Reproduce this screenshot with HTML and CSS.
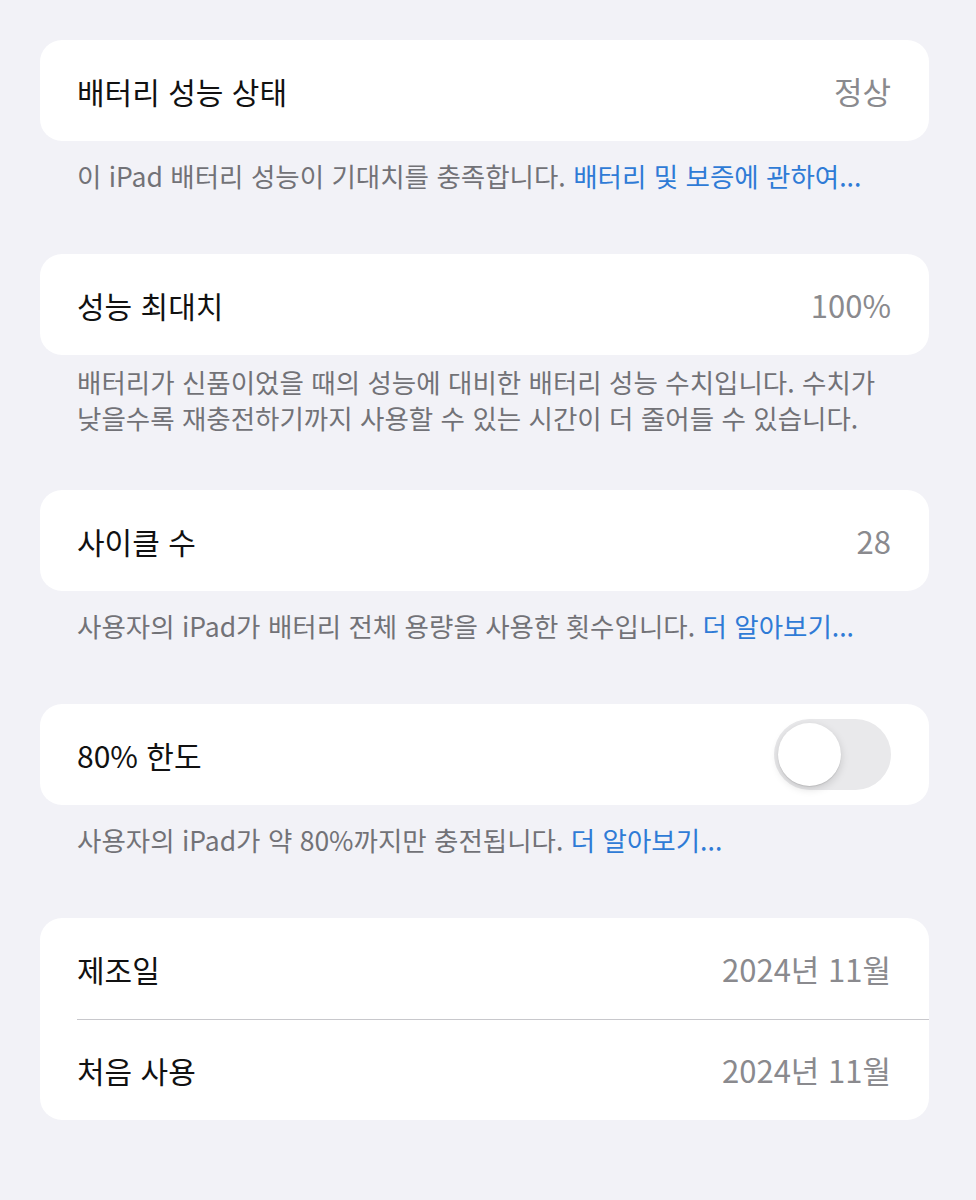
FILE: index.html
```html
<!DOCTYPE html>
<html lang="ko">
<head>
    <meta charset="UTF-8">
    <meta name="viewport" content="width=device-width, initial-scale=1.0">
    <title>배터리</title>
    <link rel="stylesheet" href="styles.css">
</head>
<body>
    <div class="page">
        <div class="card">
            <div class="row">
                <span class="label">배터리 성능 상태</span>
                <span class="value">정상</span>
            </div>
        </div>
        <p class="note">이 iPad 배터리 성능이 기대치를 충족합니다. <a href="#">배터리 및 보증에 관하여...</a></p>

        <div class="card">
            <div class="row">
                <span class="label">성능 최대치</span>
                <span class="value">100%</span>
            </div>
        </div>
        <p class="note multi">배터리가 신품이었을 때의 성능에 대비한 배터리 성능 수치입니다. 수치가<br>낮을수록 재충전하기까지 사용할 수 있는 시간이 더 줄어들 수 있습니다.</p>

        <div class="card">
            <div class="row">
                <span class="label">사이클 수</span>
                <span class="value">28</span>
            </div>
        </div>
        <p class="note">사용자의 iPad가 배터리 전체 용량을 사용한 횟수입니다. <a href="#">더 알아보기...</a></p>

        <div class="card">
            <div class="row">
                <span class="label">80% 한도</span>
                <span class="switch"><span class="knob"></span></span>
            </div>
        </div>
        <p class="note">사용자의 iPad가 약 80%까지만 충전됩니다. <a href="#">더 알아보기...</a></p>

        <div class="card">
            <div class="row">
                <span class="label">제조일</span>
                <span class="value">2024년 11월</span>
            </div>
            <div class="row">
                <span class="label">처음 사용</span>
                <span class="value">2024년 11월</span>
            </div>
        </div>
    </div>
</body>
</html>
```

FILE: styles.css
```css
body {
    margin: 0;
    background-color: #f2f2f7;
    font-family: "Noto Sans CJK KR", "Noto Sans", sans-serif;
    color: #000;
}

.page {
    padding: 40px 47px 0 40px;
}

.card {
    background-color: #fff;
    border-radius: 22px;
    overflow: hidden;
}

.row {
    display: flex;
    align-items: center;
    justify-content: space-between;
    height: 101px;
    padding: 0 38px 0 37px;
    position: relative;
}

.row + .row::before {
    content: "";
    position: absolute;
    top: 0;
    left: 37px;
    right: 0;
    height: 1px;
    background-color: #c8c8cc;
}

.label {
    font-size: 30px;
    color: #111;
}

.value {
    font-size: 31px;
    color: #8a8a8e;
}

.note {
    margin: 0;
    padding: 17px 30px 60px 37px;
    font-size: 26.5px;
    line-height: 36px;
    color: #727277;
    white-space: nowrap;
}

.note.multi {
    padding-top: 9px;
    padding-bottom: 54px;
}

.note a {
    color: #2f7bd6;
    text-decoration: none;
}

.switch {
    width: 117px;
    height: 71px;
    border-radius: 36px;
    background-color: #e9e9eb;
    padding: 4px;
    box-sizing: border-box;
    display: flex;
}

.knob {
    width: 63px;
    height: 63px;
    border-radius: 50%;
    background-color: #fff;
    box-shadow: 0 3px 8px rgba(0, 0, 0, 0.15), 0 1px 1px rgba(0, 0, 0, 0.1);
}
```
